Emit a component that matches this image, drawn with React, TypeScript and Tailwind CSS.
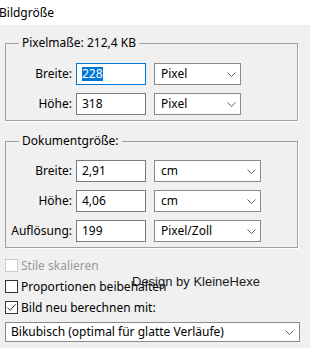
import React from "react";

const font = { fontFamily: '"Noto Sans", "Open Sans", sans-serif' };

function Chevron() {
  return (
    <svg width="9" height="5" viewBox="0 0 9 5" className="shrink-0">
      <path d="M0.5 0.5 L4.5 4.5 L8.5 0.5" fill="none" stroke="#606060" strokeWidth="1" />
    </svg>
  );
}

function Select({ value, w }: { value: string; w: string }) {
  return (
    <div className={`${w} h-[22px] border border-[#8a8a8a] bg-white flex items-center justify-between pl-[6px] pr-[4px] text-[12px] text-black`}>
      <span>{value}</span>
      <Chevron />
    </div>
  );
}

function Row({ label, value, unit, selw, focused }: { label: string; value: string; unit: string; selw: string; focused?: boolean }) {
  return (
    <div className="flex items-center h-[22px]">
      <div className="w-[66px] text-right text-[12px] text-black">{label}</div>
      <div
        className={`ml-[4px] w-[70px] h-[22px] bg-white flex items-center pl-[5px] text-[12px] ${
          focused ? "border border-[#0078d7]" : "border border-[#7a7a7a]"
        }`}
      >
        {focused ? (
          <span className="bg-[#0078d7] text-white leading-[14px]">{value}</span>
        ) : (
          <span className="text-black">{value}</span>
        )}
      </div>
      <div className="ml-[8px]">
        <Select value={unit} w={selw} />
      </div>
    </div>
  );
}

function Group({ title, children, className }: { title: string; children: React.ReactNode; className: string }) {
  return (
    <div className={`relative ml-[5px] w-[293px] border border-[#a0a0a0] shadow-[1px_1px_0_#ffffff] ${className}`}>
      <span className="absolute -top-[9px] left-[13px] px-[3px] bg-[#f0f0f0] text-[12px] leading-[16px] text-black">
        {title}
      </span>
      {children}
    </div>
  );
}

function Check({ checked, disabled }: { checked?: boolean; disabled?: boolean }) {
  return (
    <div
      className={`w-[13px] h-[13px] bg-white border ${disabled ? "border-[#cccccc]" : "border-[#333333]"} flex items-center justify-center`}
    >
      {checked && (
        <svg width="11" height="11" viewBox="0 0 11 11">
          <path d="M1.5 5.5 L4.2 8.3 L9.5 2.2" fill="none" stroke="#333333" strokeWidth="1" />
        </svg>
      )}
    </div>
  );
}

export default function App() {
  return (
    <div className="w-[310px] h-[348px] bg-[#f0f0f0] overflow-hidden relative" style={font}>
      <div className="h-[25px] bg-white flex items-center pl-0 -ml-[1px] text-[12px] text-black">Bildgröße</div>

      <Group title="Pixelmaße: 212,4 KB" className="mt-[18px] pt-[19px] pb-[5px]">
        <div className="flex flex-col gap-[8px]">
          <Row label="Breite:" value="228" unit="Pixel" selw="w-[87px]" focused />
          <Row label="Höhe:" value="318" unit="Pixel" selw="w-[87px]" />
        </div>
      </Group>

      <Group title="Dokumentgröße:" className="mt-[20px] pt-[18px] pb-[5px]">
        <div className="flex flex-col gap-[8px]">
          <Row label="Breite:" value="2,91" unit="cm" selw="w-[107px]" />
          <Row label="Höhe:" value="4,06" unit="cm" selw="w-[107px]" />
          <Row label="Auflösung:" value="199" unit="Pixel/Zoll" selw="w-[107px]" />
        </div>
      </Group>

      <div className="mt-[7px] flex flex-col">
        <div className="flex items-center h-[21px] ml-[5px] gap-[3px]">
          <Check disabled />
          <span className="text-[12px] text-[#9a9a9a]">Stile skalieren</span>
        </div>
        <div className="flex items-center h-[21px] ml-[5px] gap-[3px]">
          <Check />
          <span className="text-[12px] text-black">Proportionen beibehalten</span>
        </div>
        <div className="flex items-center h-[21px] ml-[5px] gap-[3px]">
          <Check checked />
          <span className="text-[12px] text-black">Bild neu berechnen mit:</span>
        </div>
      </div>

      <div className="mt-[4px] ml-[5px] w-[295px] h-[20px] border border-[#8a8a8a] bg-white flex items-center justify-between pl-[5px] pr-[5px] text-[12px] text-black">
        <span>Bikubisch (optimal für glatte Verläufe)</span>
        <Chevron />
      </div>

      <div
        className="absolute left-[132px] top-[274px] text-[13px] leading-[15px] text-[#1a1a1a]"
        style={{ fontFamily: '"Liberation Sans", Arial, sans-serif' }}
      >
        Design by KleineHexe
      </div>
    </div>
  );
}
